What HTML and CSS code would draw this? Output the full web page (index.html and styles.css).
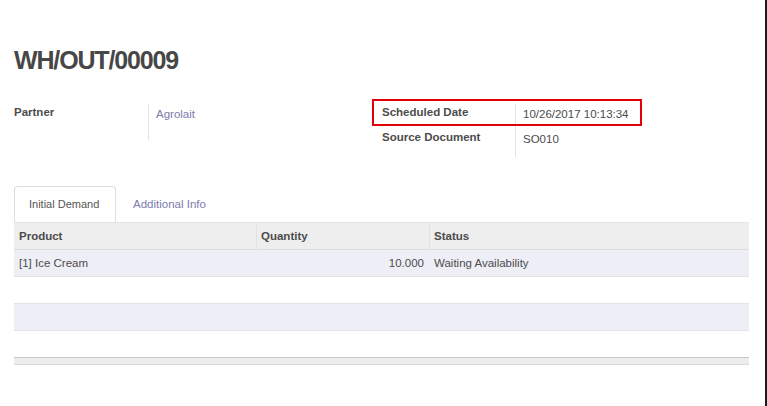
FILE: index.html
```html
<!DOCTYPE html>
<html>
<head>
<meta charset="utf-8">
<link rel="stylesheet" href="styles.css">
</head>
<body>
<div class="screen">
  <div class="sheet">
    <h1 class="title">WH/OUT/00009</h1>
    <div class="groups">
      <div class="group">
        <div class="field partner">
          <div class="label">Partner</div>
          <div class="value link">Agrolait</div>
        </div>
      </div>
      <div class="group">
        <div class="field sched highlight">
          <div class="label">Scheduled Date</div>
          <div class="value">10/26/2017 10:13:34</div>
        </div>
        <div class="field source">
          <div class="label">Source Document</div>
          <div class="value">SO010</div>
        </div>
      </div>
    </div>
    <div class="tabs">
      <div class="tab active">Initial Demand</div>
      <div class="tab link">Additional Info</div>
    </div>
    <div class="grid">
      <div class="row head">
        <div class="cell">Product</div>
        <div class="cell sep">Quantity</div>
        <div class="cell sep">Status</div>
      </div>
      <div class="row odd">
        <div class="cell">[1] Ice Cream</div>
        <div class="cell num">10.000</div>
        <div class="cell">Waiting Availability</div>
      </div>
      <div class="row"></div>
      <div class="row odd"></div>
      <div class="row last"></div>
      <div class="foot"></div>
    </div>
  </div>
</div>
</body>
</html>
```
FILE: styles.css
```css
html, body {
  margin: 0;
  padding: 0;
  background: #fff;
}
body {
  font-family: "Liberation Sans", Arial, sans-serif;
  font-size: 11.5px;
  color: #4c4c4c;
}
.screen {
  width: 767px;
  min-height: 406px;
  box-sizing: border-box;
  border-right: 2px solid #1a1a1a;
}
.sheet {
  width: 735px;
  margin-left: 14px;
  padding-top: 45px;
}
.title {
  margin: 0;
  font-size: 25px;
  line-height: 30px;
  letter-spacing: -1.15px;
  font-weight: bold;
  color: #474747;
}
.groups {
  display: flex;
  margin-top: 29px;
}
.group {
  width: 368px;
}
.group + .group {
  width: 367px;
}
.field {
  display: flex;
  line-height: 16px;
}
.field .label {
  width: 134px;
  font-weight: bold;
  color: #4c4c4c;
}
.group + .group .field .label {
  width: 133px;
}
.field .value {
  border-left: 1px solid #e2e2e2;
  padding-left: 7px;
  padding-top: 2px;
  color: #4c4c4c;
}
.field .value.link {
  color: #7c7bad;
}
.partner .value { height: 34px; }
.sched .value { height: 23px; }
.source .value { height: 26px; }
.link {
  color: #7c7bad;
}
.highlight {
  position: relative;
}
.highlight::after {
  content: "";
  position: absolute;
  left: -10px;
  top: -5px;
  width: 270px;
  height: 27px;
  box-sizing: border-box;
  border: 2px solid #e3000b;
}
.tabs {
  display: flex;
  margin-top: 29px;
  height: 36px;
}
.tab {
  display: flex;
  align-items: center;
  padding: 0 14px 2px;
  line-height: 16px;
  white-space: nowrap;
  box-sizing: border-box;
  border: 1px solid transparent;
  border-bottom: none;
  border-radius: 4px 4px 0 0;
}
.tab.active {
  border-color: #dedede;
  color: #555;
  font-size: 11px;
  width: 102px;
  padding-right: 0;
}
.tab + .tab {
  margin-left: 2px;
}
.row {
  display: grid;
  grid-template-columns: 242px 173px 1fr;
  height: 27px;
  box-sizing: border-box;
  border-bottom: 1px solid #e3e3e3;
  align-items: center;
}
.row.head {
  background: #eeeeee;
  border-top: 1px solid #e4e4e4;
  border-bottom: 1px solid #dcdcdc;
  font-weight: bold;
  height: 28px;
}
.row.head .cell {
  height: 100%;
  display: flex;
  align-items: center;
}
.row.head .cell.sep {
  border-left: 1px solid #e2e2e2;
  padding-left: 4px;
}
.cell {
  padding: 0 5px;
  white-space: nowrap;
}
.cell.num {
  text-align: right;
}
.row.odd {
  background: #eeeef6;
}
.row.last {
  border-bottom: none;
  height: 26px;
}
.foot {
  height: 8px;
  box-sizing: border-box;
  background: #ededed;
  border-top: 1px solid #c9c9c9;
  border-bottom: 1px solid #d9d9d9;
}
```
